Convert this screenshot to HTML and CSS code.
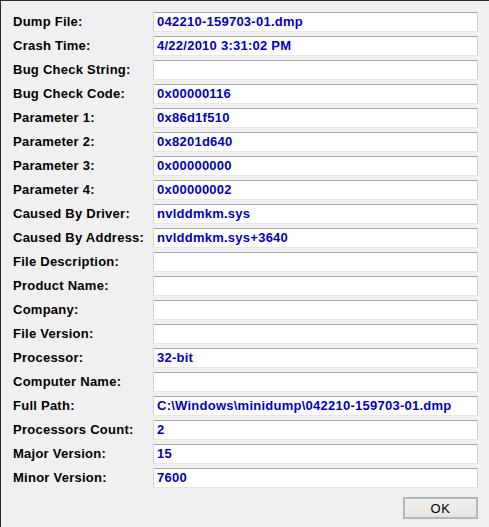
FILE: index.html
```html
<!DOCTYPE html>
<html>
<head>
<meta charset="utf-8">
<link rel="stylesheet" href="styles.css">
</head>
<body>
<div class="dialog">
  <div class="props">
    <div class="label">Dump File:</div><div class="field">042210-159703-01.dmp</div>
    <div class="label">Crash Time:</div><div class="field">4/22/2010 3:31:02 PM</div>
    <div class="label">Bug Check String:</div><div class="field"></div>
    <div class="label">Bug Check Code:</div><div class="field">0x00000116</div>
    <div class="label">Parameter 1:</div><div class="field">0x86d1f510</div>
    <div class="label">Parameter 2:</div><div class="field">0x8201d640</div>
    <div class="label">Parameter 3:</div><div class="field">0x00000000</div>
    <div class="label">Parameter 4:</div><div class="field">0x00000002</div>
    <div class="label">Caused By Driver:</div><div class="field">nvlddmkm.sys</div>
    <div class="label">Caused By Address:</div><div class="field">nvlddmkm.sys+3640</div>
    <div class="label">File Description:</div><div class="field"></div>
    <div class="label">Product Name:</div><div class="field"></div>
    <div class="label">Company:</div><div class="field"></div>
    <div class="label">File Version:</div><div class="field"></div>
    <div class="label">Processor:</div><div class="field">32-bit</div>
    <div class="label">Computer Name:</div><div class="field"></div>
    <div class="label">Full Path:</div><div class="field">C:\Windows\minidump\042210-159703-01.dmp</div>
    <div class="label">Processors Count:</div><div class="field">2</div>
    <div class="label">Major Version:</div><div class="field">15</div>
    <div class="label">Minor Version:</div><div class="field">7600</div>
  </div>
  <div class="actions">
    <button class="ok">OK</button>
  </div>
</div>
</body>
</html>
```
FILE: styles.css
```css
html, body {
  margin: 0;
  padding: 0;
  background: #f0f0f0;
}
.dialog {
  width: 488px;
  height: 526px;
  border-top: 1px solid #2b2b2b;
  border-left: 1px solid #2b2b2b;
  background: #f0f0f0;
  box-sizing: content-box;
  font-family: "Liberation Sans", Arial, sans-serif;
  font-size: 13px;
  letter-spacing: 0.25px;
  font-weight: bold;
}
.props {
  display: grid;
  grid-template-columns: 140px 325px;
  row-gap: 4px;
  padding: 11px 0 0 12px;
}
.label {
  height: 20px;
  line-height: 20px;
  color: #000;
  white-space: nowrap;
}
.field {
  box-sizing: border-box;
  height: 20px;
  line-height: 18px;
  background: #fff;
  border-top: 1px solid #a6a6a6;
  border-left: 1px solid #d2d2d2;
  border-right: 1px solid #d2d2d2;
  border-bottom: 1px solid #e6e6e6;
  padding-left: 3px;
  color: #0000c8;
  white-space: nowrap;
  overflow: hidden;
}
.actions {
  display: flex;
  justify-content: flex-end;
  padding: 9px 11px 0 0;
}
.ok {
  width: 75px;
  height: 22px;
  box-sizing: border-box;
  border: 1px solid #b9b5ad;
  outline: none;
  box-shadow: inset 0 0 0 1px #a9bdd6;
  background: linear-gradient(#f2f1ee, #e6e4dd);
  font-family: "Liberation Sans", Arial, sans-serif;
  font-weight: normal;
  font-size: 13px;
  letter-spacing: 0.5px;
  color: #000;
  padding: 0;
  border-radius: 0;
}
```
